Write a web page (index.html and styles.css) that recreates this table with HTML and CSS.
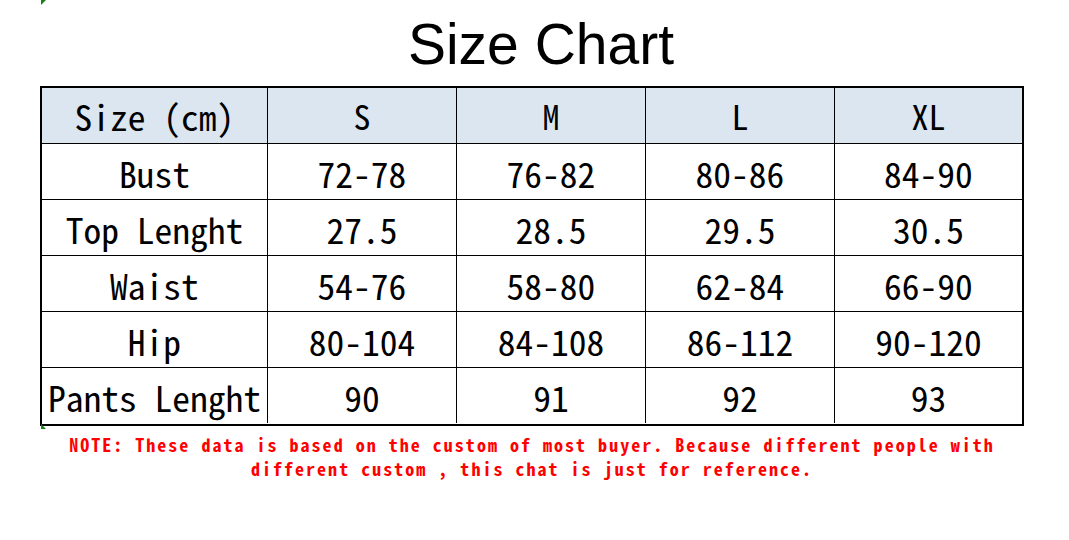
FILE: index.html
```html
<!DOCTYPE html>
<html lang="en">
<head>
<meta charset="utf-8">
<title>Size Chart</title>
<link rel="stylesheet" href="styles.css">
</head>
<body>
<div class="page">
  <span class="mark mark-top"></span>
  <h1 class="title">Size Chart</h1>
  <div class="chart">
    <div class="cell head label">Size (cm)</div>
    <div class="cell head size">S</div>
    <div class="cell head size">M</div>
    <div class="cell head size">L</div>
    <div class="cell head size last">XL</div>

    <div class="cell label">Bust</div>
    <div class="cell">72-78</div>
    <div class="cell">76-82</div>
    <div class="cell">80-86</div>
    <div class="cell last">84-90</div>

    <div class="cell label">Top Lenght</div>
    <div class="cell">27.5</div>
    <div class="cell">28.5</div>
    <div class="cell">29.5</div>
    <div class="cell last">30.5</div>

    <div class="cell label">Waist</div>
    <div class="cell">54-76</div>
    <div class="cell">58-80</div>
    <div class="cell">62-84</div>
    <div class="cell last">66-90</div>

    <div class="cell label">Hip</div>
    <div class="cell">80-104</div>
    <div class="cell">84-108</div>
    <div class="cell">86-112</div>
    <div class="cell last">90-120</div>

    <div class="cell label bottom">Pants Lenght</div>
    <div class="cell bottom">90</div>
    <div class="cell bottom">91</div>
    <div class="cell bottom">92</div>
    <div class="cell bottom last">93</div>
  </div>
  <span class="mark mark-bottom"></span>
  <p class="note">NOTE: These data is based on the custom of most buyer. Because different people with<br>different custom , this chat is just for reference.</p>
</div>
</body>
</html>
```

FILE: styles.css
```css
html, body {
  margin: 0;
  padding: 0;
  background: #ffffff;
}

.page {
  position: relative;
  width: 984px;
  margin-left: 40px;
}

.title {
  margin: 0;
  height: 83px;
  padding: 3px 0 0 18px;
  line-height: 83px;
  text-align: center;
  font-family: "Liberation Sans", Arial, sans-serif;
  font-weight: normal;
  font-size: 57px;
  color: #000;
}

.chart {
  display: grid;
  grid-template-columns: 226px 189px 189px 189px 187px;
  grid-auto-rows: 56px;
  border: 2px solid #000;
  font-family: "Noto Sans Mono CJK SC", "DejaVu Sans Mono", monospace;
  font-size: 35.5px;
  color: #000;
}

.cell {
  display: flex;
  align-items: center;
  justify-content: center;
  padding-top: 1px;
  box-sizing: border-box;
  border-right: 1px solid #000;
  border-bottom: 1px solid #000;
  white-space: pre;
}

.cell.last {
  border-right: none;
}

.cell.bottom {
  border-bottom: none;
  height: 55px;
}

.cell.head {
  background: #dce6f1;
  padding-top: 0;
}

.cell.head.size {
  font-size: 34px;
}

.note {
  margin: 6px 0 0 0;
  text-align: center;
  font-family: "Noto Sans Mono CJK SC", "DejaVu Sans Mono", monospace;
  font-weight: bold;
  font-size: 18px;
  letter-spacing: 2.02px;
  line-height: 24px;
  color: #ff0000;
}

.mark {
  position: absolute;
  left: 1px;
  width: 0;
  height: 0;
}

.mark-top {
  top: 0;
  border-top: 5px solid #1b7f1b;
  border-right: 5px solid transparent;
}

.mark-bottom {
  top: 424px;
  border-bottom: 5px solid #1b7f1b;
  border-right: 5px solid transparent;
}
```
